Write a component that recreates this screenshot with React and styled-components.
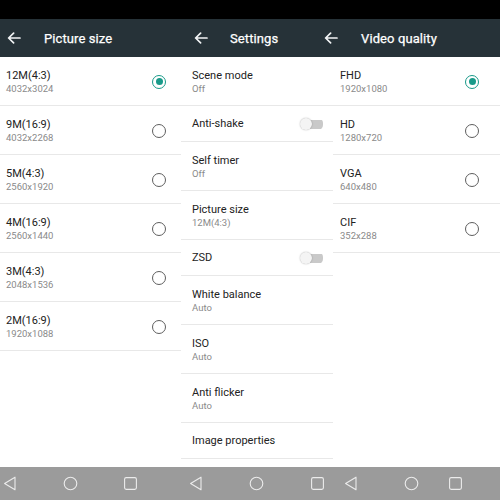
import React from "react";
import styled, { createGlobalStyle } from "styled-components";

const GlobalStyle = createGlobalStyle`
  html, body {
    margin: 0;
    padding: 0;
    background: #fff;
    font-family: Roboto, "Liberation Sans", sans-serif;
  }
`;

const Screen = styled.div`
  width: 500px;
  height: 500px;
  display: flex;
  flex-direction: column;
  background: #fff;
  overflow: hidden;
`;

const StatusBar = styled.div`
  height: 19px;
  background: #000;
`;

const Header = styled.div`
  height: 38px;
  display: flex;
  background: #263238;
`;

const HeaderGroup = styled.div`
  width: ${p => p.w}px;
  padding-left: ${p => p.pl}px;
  box-sizing: border-box;
  display: flex;
  align-items: center;
  gap: ${p => p.gap}px;
  flex-shrink: 0;
`;

const Title = styled.div`
  color: #fff;
  font-size: 13px;
  font-weight: 400;
  letter-spacing: 0.1px;
  -webkit-text-stroke: 0.25px #fff;
`;

const Body = styled.div`
  flex: 1;
  display: grid;
  grid-template-columns: 181px 152px 167px;
  align-items: start;
`;

const List = styled.div`
  display: flex;
  flex-direction: column;
`;

const Row = styled.div`
  height: ${p => p.h}px;
  box-sizing: border-box;
  display: flex;
  align-items: center;
  justify-content: space-between;
  padding: 1px ${p => p.pr}px 0 ${p => p.pl}px;
  border-bottom: 1px solid #e8e8e8;
`;

const RowText = styled.div`
  display: flex;
  flex-direction: column;
`;

const Primary = styled.div`
  font-size: 11px;
  line-height: 14px;
  color: #222;
`;

const Secondary = styled.div`
  font-size: 9.5px;
  line-height: 12px;
  color: #8a8a8a;
`;

const Radio = styled.div`
  width: 14px;
  height: 14px;
  box-sizing: border-box;
  border-radius: 50%;
  border: 1.4px solid ${p => (p.on ? "#199a89" : "#5e5e5e")};
  display: flex;
  align-items: center;
  justify-content: center;
  &::after {
    content: "";
    width: 7px;
    height: 7px;
    border-radius: 50%;
    background: ${p => (p.on ? "#199a89" : "transparent")};
  }
`;

const Toggle = styled.div`
  width: 23px;
  height: 12px;
  display: flex;
  align-items: center;
  border-radius: 5px;
  background: linear-gradient(#c9c9c9, #c9c9c9) no-repeat 4px center / 19px 9px;
  &::before {
    content: "";
    width: 12px;
    height: 12px;
    border-radius: 50%;
    background: #f4f4f4;
    box-shadow: 0 0 1.5px rgba(0, 0, 0, 0.35);
  }
`;

const NavBar = styled.div`
  height: 33px;
  background: #9b9b9b;
  display: flex;
  align-items: center;
`;

const NavSlot = styled.div`
  width: 20px;
  margin-left: ${p => p.ml}px;
  display: flex;
  justify-content: center;
  flex-shrink: 0;
`;

const BackArrow = () => (
  <svg width="14" height="12" viewBox="0 0 14 12">
    <path
      d="M13 6H1.8M6.6 1.2L1.6 6l5 4.8"
      fill="none"
      stroke="#f2f4f5"
      strokeWidth="1.7"
      strokeLinecap="round"
      strokeLinejoin="round"
    />
  </svg>
);

const NavIcon = ({ kind }) => (
  <svg width="15" height="15" viewBox="0 0 15 15">
    {kind === "back" && (
      <path d="M12 1.2v12.6L1.6 7.5z" fill="none" stroke="#ececec" strokeWidth="1.1" strokeLinejoin="round" />
    )}
    {kind === "home" && <circle cx="7.5" cy="7.5" r="6.3" fill="none" stroke="#ececec" strokeWidth="1.1" />}
    {kind === "recent" && (
      <rect x="1.6" y="1.6" width="11.8" height="11.8" rx="1.6" fill="none" stroke="#ececec" strokeWidth="1.1" />
    )}
  </svg>
);

const pictureSizes = [
  ["12M(4:3)", "4032x3024", true],
  ["9M(16:9)", "4032x2268"],
  ["5M(4:3)", "2560x1920"],
  ["4M(16:9)", "2560x1440"],
  ["3M(4:3)", "2048x1536"],
  ["2M(16:9)", "1920x1088"],
];

const settings = [
  ["Scene mode", "Off"],
  ["Anti-shake", null, true],
  ["Self timer", "Off"],
  ["Picture size", "12M(4:3)"],
  ["ZSD", null, true],
  ["White balance", "Auto"],
  ["ISO", "Auto"],
  ["Anti flicker", "Auto"],
  ["Image properties", null],
];

const videoQualities = [
  ["FHD", "1920x1080", true],
  ["HD", "1280x720"],
  ["VGA", "640x480"],
  ["CIF", "352x288"],
];

const navSlots = [
  ["back", 0], ["home", 40], ["recent", 40],
  ["back", 46], ["home", 40], ["recent", 41],
  ["back", 14], ["home", 40], ["recent", 24],
];

export default function App() {
  return (
    <Screen>
      <GlobalStyle />
      <StatusBar />
      <Header>
        <HeaderGroup w={181} pl={7} gap={23}>
          <BackArrow />
          <Title>Picture size</Title>
        </HeaderGroup>
        <HeaderGroup w={136} pl={13} gap={22}>
          <BackArrow />
          <Title>Settings</Title>
        </HeaderGroup>
        <HeaderGroup w={183} pl={7} gap={23}>
          <BackArrow />
          <Title>Video quality</Title>
        </HeaderGroup>
      </Header>
      <Body>
        <List>
          {pictureSizes.map(([t, s, on]) => (
            <Row key={t} h={49} pl={6} pr={15}>
              <RowText>
                <Primary>{t}</Primary>
                <Secondary>{s}</Secondary>
              </RowText>
              <Radio on={on} />
            </Row>
          ))}
        </List>
        <List>
          {settings.map(([t, s, toggle]) => (
            <Row key={t} h={s ? 49 : 36} pl={11} pr={10}>
              <RowText>
                <Primary>{t}</Primary>
                {s && <Secondary>{s}</Secondary>}
              </RowText>
              {toggle && <Toggle />}
            </Row>
          ))}
        </List>
        <List>
          {videoQualities.map(([t, s, on]) => (
            <Row key={t} h={49} pl={7} pr={21}>
              <RowText>
                <Primary>{t}</Primary>
                <Secondary>{s}</Secondary>
              </RowText>
              <Radio on={on} />
            </Row>
          ))}
        </List>
      </Body>
      <NavBar>
        {navSlots.map(([kind, ml], i) => (
          <NavSlot key={i} ml={ml}>
            <NavIcon kind={kind} />
          </NavSlot>
        ))}
      </NavBar>
    </Screen>
  );
}
